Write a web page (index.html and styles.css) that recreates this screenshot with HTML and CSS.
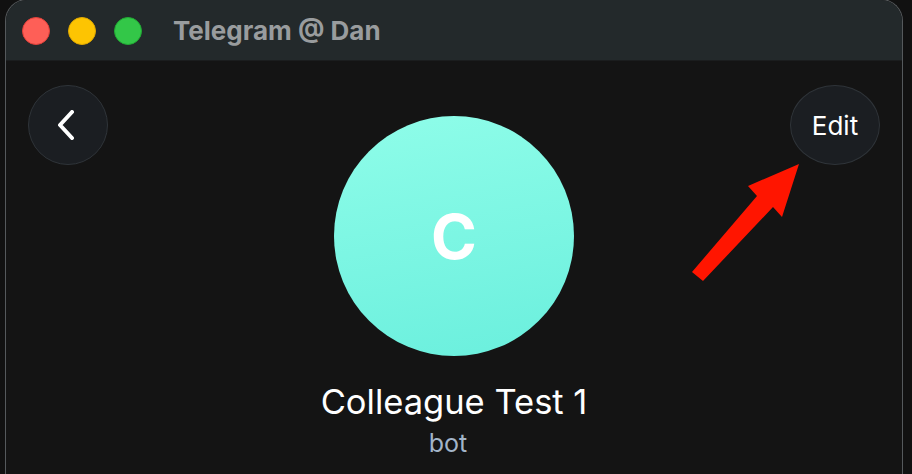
FILE: index.html
```html
<!DOCTYPE html>
<html lang="en">
<head>
<meta charset="utf-8">
<title>Telegram @ Dan</title>
<link rel="stylesheet" href="styles.css">
</head>
<body>
<div class="window">
  <header class="titlebar">
    <div class="lights">
      <span class="light red"></span>
      <span class="light yellow"></span>
      <span class="light green"></span>
    </div>
    <div class="title">Telegram @ Dan</div>
  </header>
  <main class="content">
    <button class="round back" aria-label="Back">
      <svg width="20" height="30" viewBox="0 0 20 30"><path d="M15 2 L3 15 L15 28" fill="none" stroke="#fff" stroke-width="4" stroke-linecap="round" stroke-linejoin="round"/></svg>
    </button>
    <section class="profile">
      <div class="avatar">C</div>
      <div class="name">Colleague Test 1</div>
      <div class="status">bot</div>
    </section>
    <button class="round edit">Edit</button>
  </main>
</div>
<svg class="arrow" width="912" height="474" viewBox="0 0 912 474">
  <polygon points="692,272 757,196 748,186 799,164 782,217 773,207 703,281" fill="#ff1500"/>
</svg>
</body>
</html>
```
FILE: styles.css
```css
html, body {
  margin: 0;
  padding: 0;
}
body {
  width: 912px;
  height: 474px;
  background: #111111;
  overflow: hidden;
  position: relative;
  font-family: Inter, "Noto Sans", sans-serif;
}
.window {
  margin-left: 5px;
  width: 896px;
  height: 480px;
  border: 1px solid #55595c;
  border-bottom: none;
  border-radius: 22px 22px 0 0;
  overflow: hidden;
  background: #141414;
  margin-top: -1px;
}
.titlebar {
  height: 61px;
  background: #23292b;
  border-bottom: 1px solid #1b1d1e;
  display: flex;
  align-items: center;
  box-sizing: border-box;
  padding-left: 16px;
  padding-top: 1px;
}
.lights {
  display: flex;
  gap: 18px;
}
.light {
  width: 26px;
  height: 26px;
  border-radius: 50%;
  display: block;
}
.red { background: #fe5f57; border: 1px solid #e2403a; }
.yellow { background: #fdc402; border: 1px solid #e0a800; }
.green { background: #33c748; border: 1px solid #21a934; }
.title {
  margin-left: 31px;
  font-size: 26px;
  font-weight: 700;
  color: #999c9e;
}
.content {
  display: grid;
  grid-template-columns: 1fr auto 1fr;
  align-items: start;
  padding: 24px 22px 0 22px;
}
.round {
  height: 80px;
  border-radius: 50%;
  background: #1b1e22;
  border: 1px solid #2f3439;
  box-sizing: border-box;
  color: #fff;
  display: flex;
  align-items: center;
  justify-content: center;
  padding: 0;
  font-family: inherit;
}
.back {
  width: 80px;
  justify-self: start;
}
.back svg { margin-left: -2px; }
.edit {
  width: 90px;
  font-size: 26px;
  justify-self: end;
}
.profile {
  display: flex;
  flex-direction: column;
  align-items: center;
  padding-top: 31px;
}
.avatar {
  width: 240px;
  height: 240px;
  border-radius: 50%;
  background: linear-gradient(170deg, #8ffde9 0%, #6aefdd 100%);
  color: #fff;
  font-size: 62px;
  font-weight: 700;
  display: flex;
  align-items: center;
  justify-content: center;
}
.name {
  margin-top: 24px;
  font-size: 34.5px;
  line-height: 44px;
  color: #fff;
}
.status {
  margin-top: 5px;
  margin-right: 12px;
  font-size: 25px;
  line-height: 29px;
  color: #a3b5c8;
}
.arrow {
  position: absolute;
  left: 0;
  top: 0;
  pointer-events: none;
}
```
